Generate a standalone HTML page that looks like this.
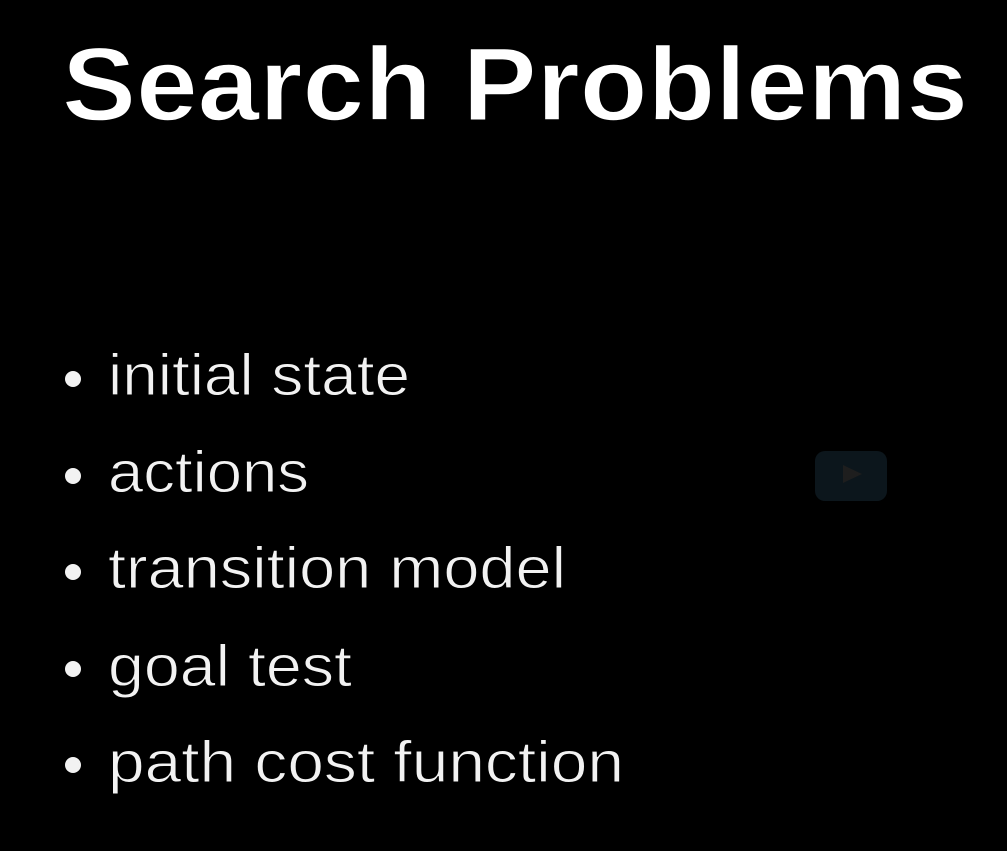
<!DOCTYPE html>
<html><head><style>
html,body{margin:0;padding:0;background:#000;}
body{width:1007px;height:851px;overflow:hidden;position:relative;}
</style></head><body>
<svg width="1007" height="851" viewBox="0 0 1007 851" xmlns="http://www.w3.org/2000/svg" style="position:absolute;left:0;top:0">
<rect width="1007" height="851" fill="#000"/>
<text x="62" y="120" font-family="Liberation Sans, sans-serif" font-weight="bold" font-size="104" fill="#fff" stroke="#000" stroke-width="1.5" textLength="906" lengthAdjust="spacingAndGlyphs">Search Problems</text>
<g fill="#f2f2f2">
<circle cx="73" cy="379" r="8"/>
<circle cx="73" cy="476" r="8"/>
<circle cx="73" cy="572" r="8"/>
<circle cx="73" cy="669" r="8"/>
<circle cx="73" cy="765" r="8"/>
</g>
<g fill="#f2f2f2" stroke="#000" stroke-width="1" font-family="Liberation Sans, sans-serif" font-size="58">
<text x="108" y="395" textLength="302" lengthAdjust="spacingAndGlyphs">initial state</text>
<text x="108" y="492" textLength="201" lengthAdjust="spacingAndGlyphs">actions</text>
<text x="108" y="588" textLength="458" lengthAdjust="spacingAndGlyphs">transition model</text>
<text x="108" y="686" textLength="244" lengthAdjust="spacingAndGlyphs">goal test</text>
<text x="108" y="782" textLength="516" lengthAdjust="spacingAndGlyphs">path cost function</text>
</g>
<rect x="815" y="451" width="72" height="50" rx="10" fill="#0c161c"/>
<polygon points="843,465 862,474 843,483" fill="#1e1e1e"/>
</svg>
</body></html>
